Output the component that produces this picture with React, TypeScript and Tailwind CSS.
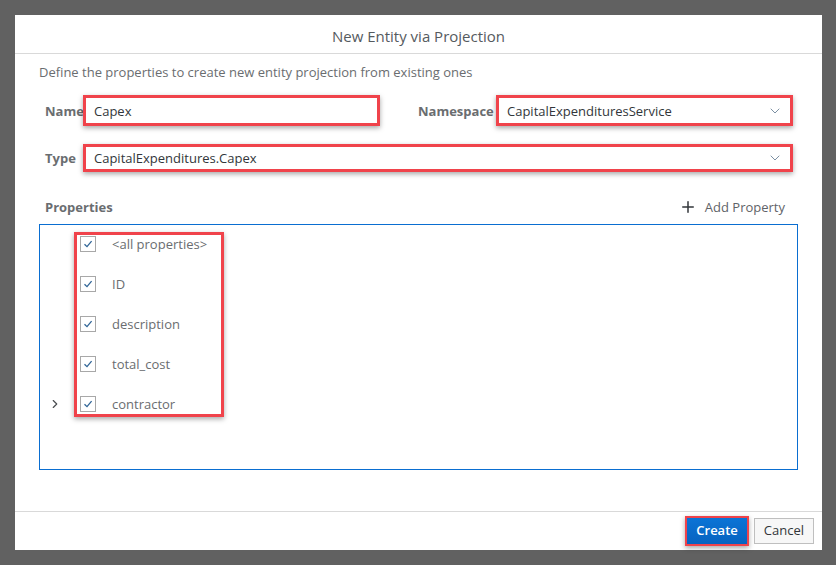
import { ChevronDown, ChevronRight, Plus } from "lucide-react";

const props = ["<all properties>", "ID", "description", "total_cost", "contractor"];

function Check() {
  return (
    <span className="w-4 h-4 border border-[#a8a8a8] bg-white flex items-center justify-center">
      <svg width="10" height="10" viewBox="0 0 10 10" fill="none">
        <path d="M1.5 5.2 L4 7.6 L8.6 2.2" stroke="#2f6496" strokeWidth="1.3" />
      </svg>
    </span>
  );
}

export default function App() {
  return (
    <div
      className="w-[836px] h-[565px] bg-[#616161] pt-[15px] pl-[15px]"
      style={{ fontFamily: '"Open Sans", "Liberation Sans", sans-serif' }}
    >
      <div className="w-[807px] h-[535px] bg-white flex flex-col">
        {/* Header */}
        <div className="h-[39px] border-b border-[#d9d9d9] flex items-center justify-center pt-[3px]">
          <h1 className="text-[15px] leading-[20px] text-[#555a5e]">New Entity via Projection</h1>
        </div>

        <div className="flex-1 px-[24px] pt-[9px]">
          <p className="text-[13px] leading-[18px] text-[#6a6d70]">
            Define the properties to create new entity projection from existing ones
          </p>

          {/* Name / Namespace */}
          <div className="flex items-center mt-[14px] ml-[6px] text-[13px] leading-[18px]">
            <span className="w-[38px] font-bold text-[#6a6d70]">Name</span>
            <div className="w-[297px] h-[31px] border-[3px] border-[#f0434b] shadow-[0_2px_5px_rgba(0,0,0,0.35)] flex items-center pl-[8px] text-[#32363a]">
              Capex
            </div>
            <span className="ml-[38px] w-[78px] font-bold text-[#6a6d70]">Namespace</span>
            <div className="w-[297px] h-[31px] border-[3px] border-[#f0434b] shadow-[0_2px_5px_rgba(0,0,0,0.35)] flex items-center justify-between pl-[8px] pr-[7px] text-[#32363a]">
              CapitalExpendituresService
              <ChevronDown size={16} strokeWidth={1.2} className="text-[#5b738b]" />
            </div>
          </div>

          {/* Type */}
          <div className="flex items-center mt-[18px] ml-[6px] text-[13px] leading-[18px]">
            <span className="w-[38px] font-bold text-[#6a6d70]">Type</span>
            <div className="w-[710px] h-[28px] border-[3px] border-[#f0434b] shadow-[0_2px_5px_rgba(0,0,0,0.35)] flex items-center justify-between pl-[8px] pr-[7px] text-[#32363a]">
              CapitalExpenditures.Capex
              <ChevronDown size={16} strokeWidth={1.2} className="text-[#5b738b]" />
            </div>
          </div>

          {/* Properties header */}
          <div className="flex items-center justify-between mt-[25px] h-[20px] pl-[6px] pr-[13px] text-[13px] leading-[18px]">
            <span className="font-bold text-[#6a6d70]">Properties</span>
            <span className="flex items-center gap-[8px] text-[#5f6368]">
              <Plus size={18} strokeWidth={2} className="text-[#32363a]" />
              Add Property
            </span>
          </div>

          {/* Properties list */}
          <div className="mt-[7px] h-[246px] border border-[#0a6ed1] pt-[7px]">
            <div className="flex">
              <div className="w-[34px] flex flex-col justify-end pb-[6px] pl-[8px]">
                <ChevronRight size={14} strokeWidth={2} className="text-[#4a4d50]" />
              </div>
              <div className="w-[150px] border-[3px] border-[#f0434b] shadow-[0_2px_5px_rgba(0,0,0,0.35)] flex flex-col gap-[24px] pt-[1px] pb-[2px]">
                {props.map((p) => (
                  <div key={p} className="flex items-center h-[16px] pl-[3px] gap-[16px]">
                    <Check />
                    <span className="text-[13px] leading-[18px] text-[#6a6d70]">{p}</span>
                  </div>
                ))}
              </div>
            </div>
          </div>
        </div>

        {/* Footer */}
        <div className="h-[39px] border-t border-[#d9d9d9] flex items-center justify-end pr-[8px] gap-[5px] text-[13px]">
          <div className="border-2 border-[#f0434b] shadow-[0_2px_5px_rgba(0,0,0,0.35)]">
            <button className="h-[26px] px-[9px] bg-gradient-to-b from-[#0b74d6] to-[#0763c0] text-white font-semibold">
              Create
            </button>
          </div>
          <button className="h-[26px] px-[9px] border border-[#bfbfbf] bg-[#f7f7f7] text-[#32363a]">
            Cancel
          </button>
        </div>
      </div>
    </div>
  );
}
